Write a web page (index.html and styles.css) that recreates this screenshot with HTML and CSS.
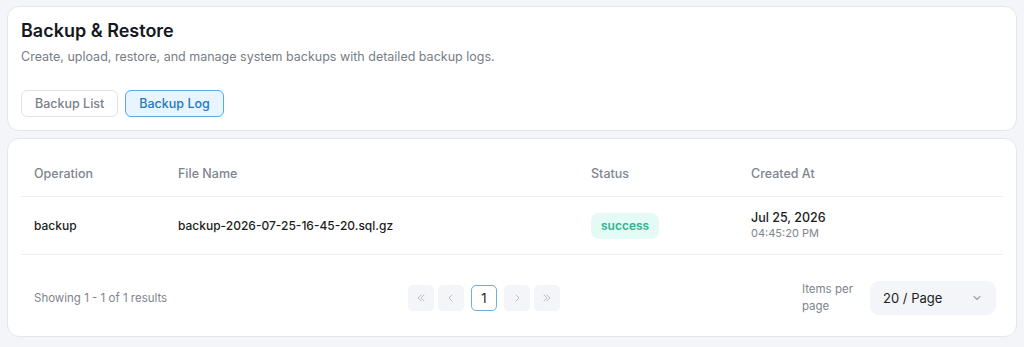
FILE: index.html
```html
<!DOCTYPE html>
<html lang="en">
<head>
  <meta charset="UTF-8" />
  <meta name="viewport" content="width=device-width, initial-scale=1.0" />
  <title>Backup &amp; Restore</title>
  <link rel="stylesheet" href="styles.css">
</head>
<body>
  <div class="card head-card">
    <h1>Backup &amp; Restore</h1>
    <p class="sub">Create, upload, restore, and manage system backups with detailed backup logs.</p>
    <div class="tabs">
      <button class="tab">Backup List</button>
      <button class="tab active">Backup Log</button>
    </div>
  </div>

  <div class="card table-card">
    <table class="log-table">
      <thead>
        <tr>
          <th class="c-op">Operation</th>
          <th class="c-file">File Name</th>
          <th class="c-status">Status</th>
          <th>Created At</th>
        </tr>
      </thead>
      <tbody>
        <tr>
          <td>backup</td>
          <td>backup-2026-07-25-16-45-20.sql.gz</td>
          <td><span class="badge">success</span></td>
          <td>
            <div class="date">Jul 25, 2026</div>
            <div class="time">04:45:20 PM</div>
          </td>
        </tr>
      </tbody>
    </table>

    <div class="footer">
      <div class="showing">Showing 1 - 1 of 1 results</div>
      <div class="pager">
        <button class="pg"><svg width="10" height="10" viewBox="0 0 10 10"><path d="M5 2L2 5l3 3M8 2L5 5l3 3" fill="none" stroke="#b8bdc4" stroke-width="1" stroke-linecap="round" stroke-linejoin="round"/></svg></button>
        <button class="pg"><svg width="10" height="10" viewBox="0 0 10 10"><path d="M6 2L3 5l3 3" fill="none" stroke="#b8bdc4" stroke-width="1" stroke-linecap="round" stroke-linejoin="round"/></svg></button>
        <button class="pg current">1</button>
        <button class="pg"><svg width="10" height="10" viewBox="0 0 10 10"><path d="M4 2l3 3-3 3" fill="none" stroke="#b8bdc4" stroke-width="1" stroke-linecap="round" stroke-linejoin="round"/></svg></button>
        <button class="pg"><svg width="10" height="10" viewBox="0 0 10 10"><path d="M2 2l3 3-3 3M5 2l3 3-3 3" fill="none" stroke="#b8bdc4" stroke-width="1" stroke-linecap="round" stroke-linejoin="round"/></svg></button>
      </div>
      <div class="per-page">
        <span class="per-label">Items per<br>page</span>
        <div class="select">
          <span>20 / Page</span>
          <svg width="12" height="12" viewBox="0 0 12 12"><path d="M3 4.5l3 3 3-3" fill="none" stroke="#9aa1ab" stroke-width="1.1" stroke-linecap="round" stroke-linejoin="round"/></svg>
        </div>
      </div>
    </div>
  </div>
</body>
</html>
```

FILE: styles.css
```css
body { margin: 0; padding: 6px 7px; background: #f3f5f9; font-family: Inter, "Noto Sans", sans-serif; color: #1f2329; }
.card { background: #fff; border: 1px solid #e1e7ef; border-radius: 12px; }
.head-card { padding: 12px 13px 13px; margin-bottom: 7px; }
h1 { margin: 0; font-size: 18px; line-height: 24px; font-weight: 600; color: #15181d; }
.sub { margin: 4px 0 0; font-size: 12.5px; line-height: 20px; color: #777d86; }
.tabs { display: flex; gap: 7px; margin-top: 23px; }
.tab { height: 27px; padding: 0 13px; border: 1px solid #dfe3e8; background: #fff; border-radius: 6px; font-family: inherit; font-size: 12.5px; font-weight: 500; color: #7b8088; }
.tab.active { background: #e8f4fe; border-color: #5ba7e1; color: #1f79c2; }
.table-card { padding: 12px 13px 0; }
.log-table { width: 100%; border-collapse: collapse; font-size: 12.5px; }
.log-table th { text-align: left; font-weight: 500; color: #80858d; height: 45px; padding: 0 13px; border-bottom: 1px solid #eceff3; }
.log-table td { height: 57px; padding: 0 13px; border-bottom: 1px solid #eceff3; font-weight: 500; color: #1a1d22; font-size: 12px; }
.c-op { width: 118px; }
.c-file { width: 387px; }
.c-status { width: 134px; }
.badge { display: inline-block; padding: 0 10px; height: 26px; line-height: 26px; border-radius: 8px; background: #e4faf5; color: #2fb48d; font-weight: 600; font-size: 12px; }
.date { font-size: 12.5px; line-height: 16px; }
.time { font-size: 11px; line-height: 15px; color: #80858d; font-weight: 400; }
.footer { display: flex; align-items: center; justify-content: space-between; height: 81px; padding: 4px 7px 0 13px; box-sizing: border-box; }
.showing { font-size: 11.5px; color: #80858d; width: 374px; }
.pager { display: flex; gap: 4px; }
.pg { display: flex; align-items: center; justify-content: center; width: 26px; height: 26px; padding: 0; border: 1px solid #f3f5f8; background: #f3f5f8; border-radius: 5px; font-family: inherit; font-size: 13px; color: #b5bac1; }
.pg.current { background: #fff; border-color: #6aaee3; color: #1a1d22; font-size: 13px; margin: 0 3px; }
.per-page { display: flex; align-items: center; gap: 17px; margin-left: auto; }
.per-label { font-size: 11.5px; line-height: 17px; color: #80858d; }
.select { display: flex; align-items: center; justify-content: space-between; width: 100px; height: 34px; padding: 0 13px; background: #f3f5f8; border-radius: 9px; font-size: 13px; color: #1a1d22; }
```
